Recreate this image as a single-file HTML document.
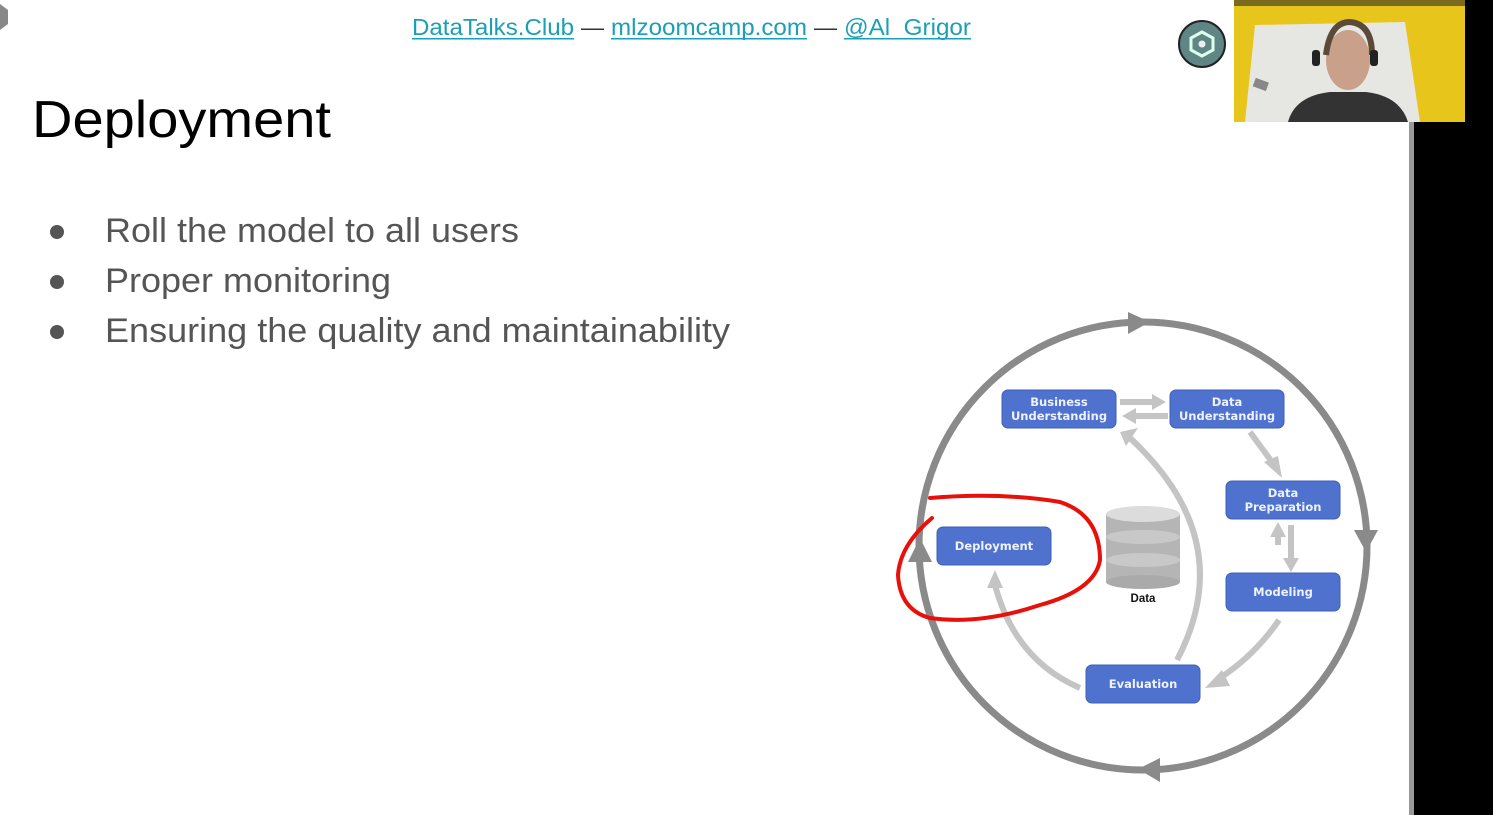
<!DOCTYPE html>
<html><head><meta charset="utf-8"><style>
html,body{margin:0;padding:0;background:#fff;width:1493px;height:815px;overflow:hidden}
svg{display:block}
text{font-family:"Liberation Sans",Arial,sans-serif}
.bx{fill:#4f72cf;stroke:#3f5fb8;stroke-width:1}
.bt{fill:#eef2ff;font-family:"DejaVu Sans",sans-serif;font-weight:bold;font-size:11.5px;text-anchor:middle}
</style></head><body>
<svg width="1493" height="815" viewBox="0 0 1493 815">
<rect width="1493" height="815" fill="#fff"/>
<!-- right black -->
<rect x="1413" y="120" width="80" height="695" fill="#000"/>
<rect x="1409" y="120" width="5" height="695" fill="#999"/>
<rect x="1465" y="0" width="28" height="122" fill="#000"/>
<!-- webcam -->
<rect x="1234" y="0" width="231" height="122" fill="#e8c51a"/>
<polygon points="1255,25 1405,22 1420,122 1245,122" fill="#e6e6e2"/>
<rect x="1234" y="0" width="231" height="6" fill="#7a6a20"/>
<ellipse cx="1348" cy="60" rx="22" ry="30" fill="#c9a08a"/>
<path d="M1326,55 Q1330,22 1350,22 Q1372,24 1372,55" fill="none" stroke="#5b4a3a" stroke-width="6"/>
<rect x="1312" y="50" width="8" height="16" rx="3" fill="#222"/>
<rect x="1370" y="50" width="8" height="16" rx="3" fill="#222"/>
<path d="M1288,122 Q1295,96 1330,92 L1366,92 Q1400,96 1408,122 Z" fill="#333"/>
<rect x="1254" y="80" width="14" height="9" fill="#888" transform="rotate(20 1261 84)"/>
<!-- circle icon -->
<circle cx="1202" cy="44" r="23" fill="#5f8585" stroke="#222" stroke-width="2"/>
<polygon points="1202,32 1213,38 1213,50 1202,56 1191,50 1191,38" fill="none" stroke="#dfe" stroke-width="3"/>
<circle cx="1202" cy="44" r="3.5" fill="#eee"/>
<!-- left corner icon -->
<polygon points="0,4 8,10 8,24 0,30" fill="#888"/>
<!-- header -->
<text x="412" y="35" font-size="23" fill="#1a9fb5" textLength="162" lengthAdjust="spacingAndGlyphs">DataTalks.Club</text>
<rect x="412" y="38" width="162" height="1.5" fill="#1a9fb5"/>
<text x="581" y="35" font-size="23" fill="#333">—</text>
<text x="611" y="35" font-size="23" fill="#1a9fb5" textLength="196" lengthAdjust="spacingAndGlyphs">mlzoomcamp.com</text>
<rect x="611" y="38" width="196" height="1.5" fill="#1a9fb5"/>
<text x="814" y="35" font-size="23" fill="#333">—</text>
<text x="844" y="35" font-size="23" fill="#1a9fb5" textLength="127" lengthAdjust="spacingAndGlyphs">@Al_Grigor</text>
<rect x="844" y="38" width="127" height="1.5" fill="#1a9fb5"/>
<!-- title -->
<text x="32" y="137" font-size="52" fill="#000" textLength="299" lengthAdjust="spacingAndGlyphs">Deployment</text>
<!-- bullets -->
<g fill="#555">
<circle cx="57" cy="232" r="7"/><circle cx="57" cy="282" r="7"/><circle cx="57" cy="332" r="7"/>
<text x="105" y="242" font-size="34" textLength="414" lengthAdjust="spacingAndGlyphs">Roll the model to all users</text>
<text x="105" y="292" font-size="34" textLength="286" lengthAdjust="spacingAndGlyphs">Proper monitoring</text>
<text x="105" y="342" font-size="34" textLength="625" lengthAdjust="spacingAndGlyphs">Ensuring the quality and maintainability</text>
</g>
<!-- diagram outer circle -->
<circle cx="1143" cy="546" r="224" fill="none" stroke="#8a8a8a" stroke-width="7"/>
<polygon points="1128,312 1150,322 1128,334" fill="#8a8a8a"/>
<polygon points="1354,530 1378,530 1366,552" fill="#8a8a8a"/>
<polygon points="1160,758 1138,769 1160,782" fill="#8a8a8a"/>
<polygon points="908,562 932,562 920,538" fill="#8a8a8a"/>
<!-- inner arrows -->
<g fill="none" stroke="#c4c4c4" stroke-width="6">
<line x1="1120" y1="402" x2="1155" y2="402"/>
<line x1="1168" y1="416" x2="1135" y2="416"/>
<path d="M1250,432 L1272,462"/>
<line x1="1278" y1="545" x2="1278" y2="532"/>
<line x1="1291" y1="525" x2="1291" y2="560"/>
<path d="M1279,620 Q1255,655 1220,678"/>
<path d="M1177,660 Q1240,540 1130,438"/>
<path d="M1080,688 Q1015,660 995,585"/>
</g>
<g fill="#c4c4c4">
<polygon points="1152,394 1166,402 1152,410"/>
<polygon points="1136,408 1122,416 1136,424"/>
<polygon points="1264,462 1282,478 1278,456"/>
<polygon points="1270,537 1278,522 1286,537"/>
<polygon points="1283,558 1291,572 1299,558"/>
<polygon points="1222,670 1205,688 1230,686"/>
<polygon points="1120,432 1138,428 1126,446"/>
<polygon points="987,588 995,570 1003,588"/>
</g>
<!-- boxes -->
<rect class="bx" x="1002" y="390" width="114" height="38" rx="6"/>
<text class="bt" x="1059" y="406">Business</text><text class="bt" x="1059" y="420">Understanding</text>
<rect class="bx" x="1170" y="390" width="114" height="38" rx="6"/>
<text class="bt" x="1227" y="406">Data</text><text class="bt" x="1227" y="420">Understanding</text>
<rect class="bx" x="1226" y="481" width="114" height="38" rx="6"/>
<text class="bt" x="1283" y="497">Data</text><text class="bt" x="1283" y="511">Preparation</text>
<rect class="bx" x="1226" y="573" width="114" height="38" rx="6"/>
<text class="bt" x="1283" y="596">Modeling</text>
<rect class="bx" x="1086" y="665" width="114" height="38" rx="6"/>
<text class="bt" x="1143" y="688">Evaluation</text>
<rect class="bx" x="937" y="527" width="114" height="38" rx="6"/>
<text class="bt" x="994" y="550">Deployment</text>
<!-- database -->
<g>
<rect x="1106" y="514" width="74" height="68" fill="#b5b5b5"/>
<ellipse cx="1143" cy="582" rx="37" ry="7" fill="#aaa"/>
<ellipse cx="1143" cy="560" rx="37" ry="7" fill="#c8c8c8"/>
<ellipse cx="1143" cy="537" rx="37" ry="7" fill="#c8c8c8"/>
<ellipse cx="1143" cy="514" rx="37" ry="8" fill="#dcdcdc"/>
</g>
<text x="1143" y="602" font-family="DejaVu Sans,sans-serif" font-weight="bold" font-size="11.5" text-anchor="middle" fill="#111">Data</text>
<!-- red annotation -->
<path d="M930,498 Q1000,492 1060,502 Q1100,515 1100,560 Q1095,590 1040,605 Q980,625 930,618 Q900,610 898,575 Q900,545 932,518" fill="none" stroke="#e8100a" stroke-width="4" stroke-linecap="round"/>
</svg>
</body></html>
